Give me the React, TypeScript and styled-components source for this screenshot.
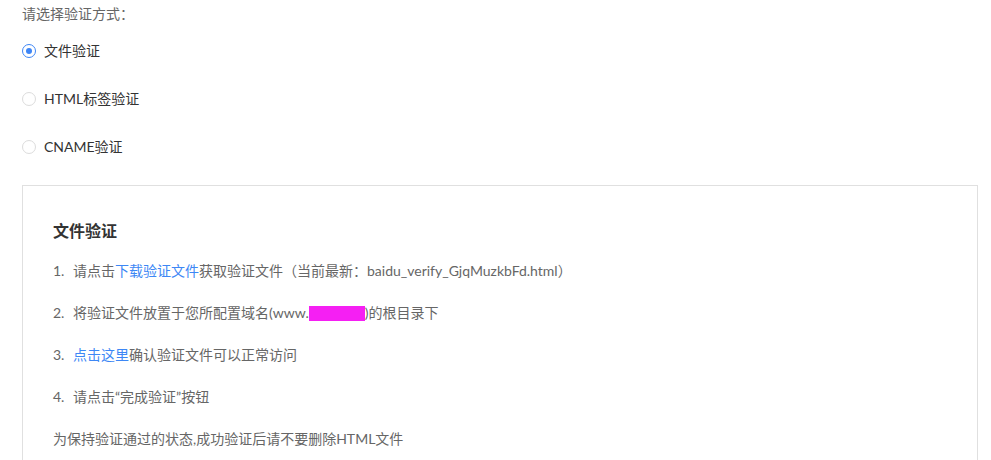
import React, { useState } from "react";
import styled, { createGlobalStyle } from "styled-components";

const GlobalStyle = createGlobalStyle`
  body {
    margin: 0;
    background: #fff;
    font-family: Lato, "Noto Sans CJK SC", sans-serif;
  }
`;

const Page = styled.div`
  padding: 4px 13px 0 22px;
  height: 460px;
  overflow: hidden;
  box-sizing: border-box;
`;

const Title = styled.div`
  font-size: 14px;
  line-height: 20px;
  color: #666;
`;

const RadioGroup = styled.div`
  display: flex;
  flex-direction: column;
  gap: 28px;
  padding-top: 17px;
`;

const Option = styled.label`
  display: flex;
  align-items: center;
  gap: 8px;
  font-size: 14px;
  line-height: 20px;
  color: #333;
  cursor: pointer;
`;

const Radio = styled.span<{ $checked: boolean }>`
  width: 14px;
  height: 14px;
  border-radius: 50%;
  box-sizing: border-box;
  border: 1px solid ${(p) => (p.$checked ? "#3e86f6" : "#dcdcdc")};
  display: flex;
  align-items: center;
  justify-content: center;
  &::after {
    content: "";
    width: 6px;
    height: 6px;
    border-radius: 50%;
    background: ${(p) => (p.$checked ? "#3e86f6" : "transparent")};
  }
`;

const Panel = styled.div`
  margin-top: 28px;
  border: 1px solid #e0e0e0;
  padding: 34px 30px 40px;
`;

const Heading = styled.div`
  font-size: 16px;
  line-height: 22px;
  font-weight: bold;
  color: #333;
`;

const Steps = styled.div`
  display: flex;
  flex-direction: column;
  gap: 22px;
  margin-top: 19px;
`;

const Step = styled.div`
  display: flex;
  font-size: 14px;
  line-height: 20px;
  color: #666;
`;

const Num = styled.span`
  width: 20px;
`;

const Link = styled.a`
  color: #3d87f5;
  text-decoration: none;
`;

const Masked = styled.span`
  display: inline-block;
  width: 56px;
  height: 15px;
  margin-top: 3px;
  background: #f51ff3;
`;

const options = ["文件验证", "HTML标签验证", "CNAME验证"];

const App = () => {
  const [selected, setSelected] = useState(0);

  return (
    <Page>
      <GlobalStyle />
      <Title>请选择验证方式：</Title>
      <RadioGroup>
        {options.map((label, i) => (
          <Option key={label} onClick={() => setSelected(i)}>
            <Radio $checked={selected === i} />
            {label}
          </Option>
        ))}
      </RadioGroup>
      <Panel>
        <Heading>文件验证</Heading>
        <Steps>
          <Step>
            <Num>1.</Num>
            <span>
              请点击<Link href="#">下载验证文件</Link>
              获取验证文件（当前最新：baidu_verify_GjqMuzkbFd.html）
            </span>
          </Step>
          <Step>
            <Num>2.</Num>
            <span>将验证文件放置于您所配置域名(www.</span>
            <Masked />
            <span>)的根目录下</span>
          </Step>
          <Step>
            <Num>3.</Num>
            <span>
              <Link href="#">点击这里</Link>确认验证文件可以正常访问
            </span>
          </Step>
          <Step>
            <Num>4.</Num>
            <span>请点击“完成验证”按钮</span>
          </Step>
          <Step>为保持验证通过的状态,成功验证后请不要删除HTML文件</Step>
        </Steps>
      </Panel>
    </Page>
  );
};

export default App;
